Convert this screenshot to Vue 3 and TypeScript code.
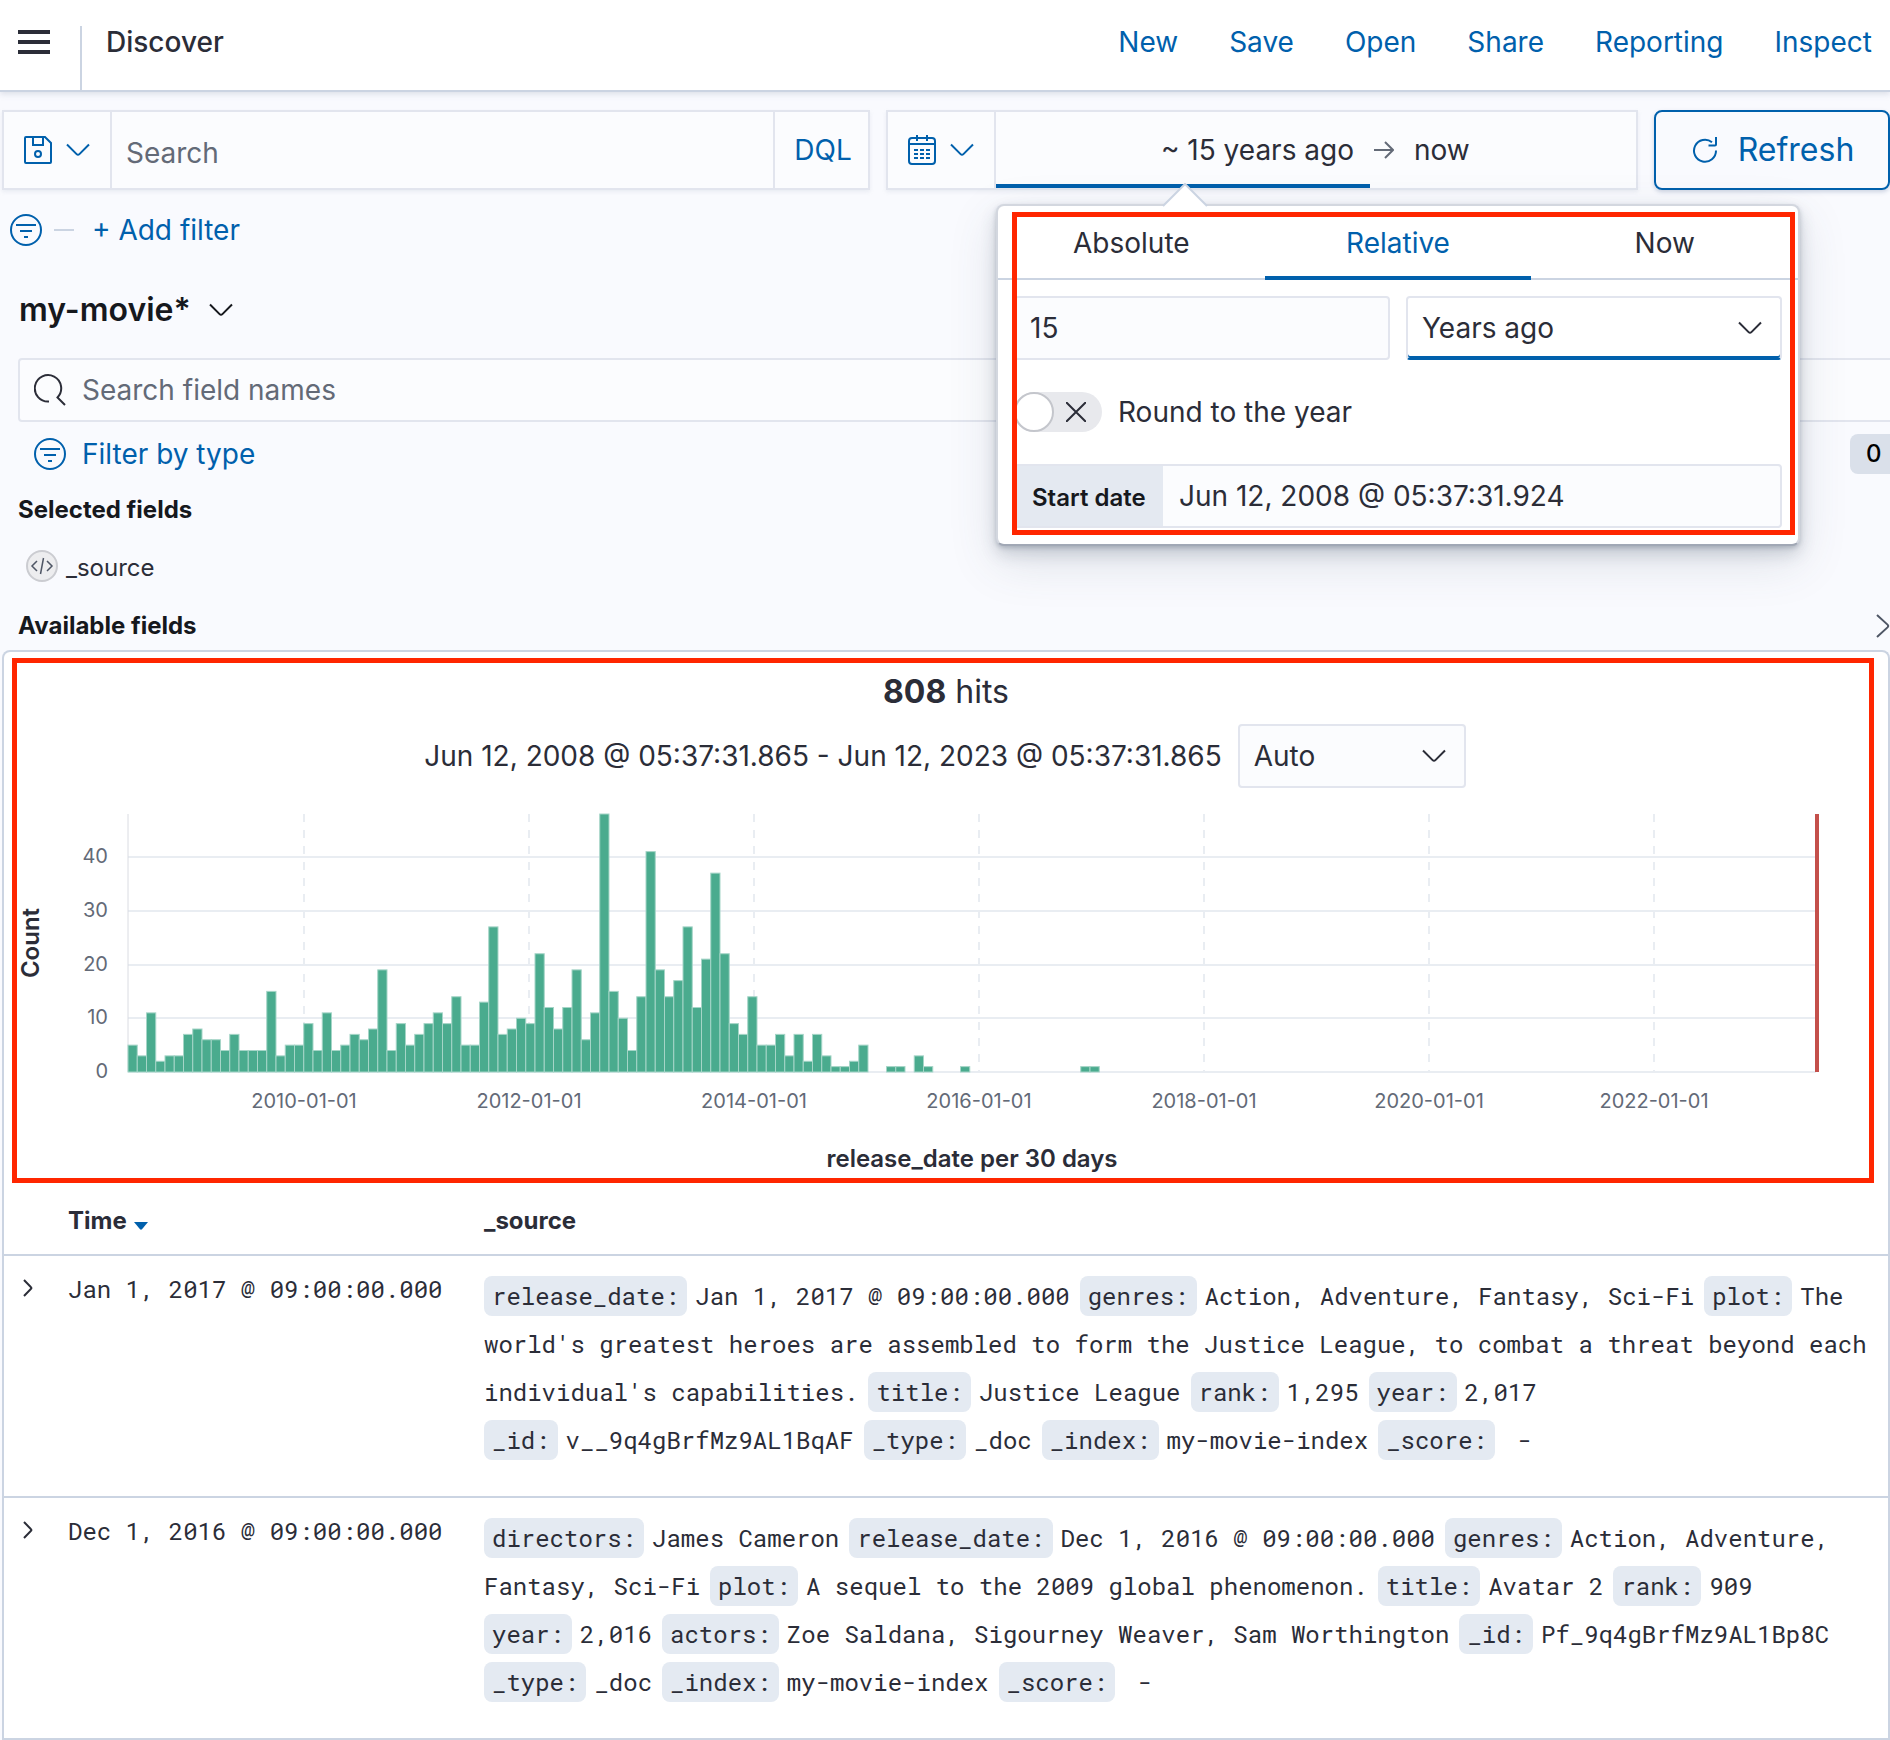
<script setup lang="ts">
import { computed, ref } from 'vue'

interface Field {
  name: string
  value: string
}
interface Hit {
  time: string
  fields: Field[]
}

const menu: string[] = ['New', 'Save', 'Open', 'Share', 'Reporting', 'Inspect']
const tabs: string[] = ['Absolute', 'Relative', 'Now']
const activeTab = ref('Relative')
const query = ref('')
const fieldQuery = ref('')
const amount = ref('15')
const unit = ref('Years ago')
const rounded = ref(false)
const interval = ref('Auto')
const startDate = ref('Jun 12, 2008 @ 05:37:31.924')

// Documents per 30-day bucket, starting at the left edge of the time range
const counts: number[] = [
  5, 3, 11, 2, 3, 3, 7, 8, 6, 6, 4, 7, 4, 4, 4, 15, 3, 5, 5, 9,
  4, 11, 4, 5, 7, 6, 8, 19, 4, 9, 5, 7, 9, 11, 9, 14, 5, 5, 13, 27,
  7, 8, 10, 9, 22, 12, 8, 12, 19, 6, 11, 48, 15, 10, 4, 14, 41, 19, 14, 17,
  27, 12, 21, 37, 22, 9, 7, 14, 5, 5, 7, 3, 7, 2, 7, 3, 1, 1, 2, 5,
  0, 0, 1, 1, 0, 3, 1, 0, 0, 0, 1, 0, 0, 0, 0, 0, 0, 0, 0, 0,
  0, 0, 0, 1, 1,
]
const plot = { left: 111, right: 1799, top: 10, bottom: 268 }
const step = 9.25
const perUnit = (plot.bottom - plot.top) / 48

const bars = computed(() =>
  counts
    .map((count, i) => ({
      x: plot.left + i * step,
      y: plot.bottom - count * perUnit,
      height: count * perUnit,
      count,
    }))
    .filter((bar) => bar.count > 0),
)
const yTicks = [0, 10, 20, 30, 40].map((value) => ({
  value,
  y: Math.round(plot.bottom - value * perUnit),
}))
const xTicks = [2010, 2012, 2014, 2016, 2018, 2020, 2022].map((year, i) => ({
  label: `${year}-01-01`,
  x: 287 + i * 225,
}))

const hits: Hit[] = [
  {
    time: 'Jan 1, 2017 @ 09:00:00.000',
    fields: [
      { name: 'release_date', value: 'Jan 1, 2017 @ 09:00:00.000' },
      { name: 'genres', value: 'Action, Adventure, Fantasy, Sci-Fi' },
      {
        name: 'plot',
        value:
          "The world's greatest heroes are assembled to form the Justice League, to combat a threat beyond each individual's capabilities.",
      },
      { name: 'title', value: 'Justice League' },
      { name: 'rank', value: '1,295' },
      { name: 'year', value: '2,017' },
      { name: '_id', value: 'v__9q4gBrfMz9AL1BqAF' },
      { name: '_type', value: '_doc' },
      { name: '_index', value: 'my-movie-index' },
      { name: '_score', value: '\u00a0-' },
    ],
  },
  {
    time: 'Dec 1, 2016 @ 09:00:00.000',
    fields: [
      { name: 'directors', value: 'James Cameron' },
      { name: 'release_date', value: 'Dec 1, 2016 @ 09:00:00.000' },
      { name: 'genres', value: 'Action, Adventure, Fantasy, Sci-Fi' },
      { name: 'plot', value: 'A sequel to the 2009 global phenomenon.' },
      { name: 'title', value: 'Avatar 2' },
      { name: 'rank', value: '909' },
      { name: 'year', value: '2,016' },
      { name: 'actors', value: 'Zoe Saldana, Sigourney Weaver, Sam Worthington' },
      { name: '_id', value: 'Pf_9q4gBrfMz9AL1Bp8C' },
      { name: '_type', value: '_doc' },
      { name: '_index', value: 'my-movie-index' },
      { name: '_score', value: '\u00a0-' },
    ],
  },
]
</script>

<template>
  <div class="page">
    <header class="header">
      <button class="burger" type="button" aria-label="Toggle navigation">
        <svg width="32" height="24" viewBox="0 0 32 24"><path d="M0 2h32M0 12h32M0 22h32" stroke="#2b2d38" stroke-width="4" /></svg>
      </button>
      <h1 class="title">Discover</h1>
      <nav class="menu">
        <a v-for="item in menu" :key="item" href="#">{{ item }}</a>
      </nav>
    </header>

    <div class="querybar">
      <div class="box search">
        <button class="box-button" type="button" aria-label="Saved queries">
          <svg width="28" height="28" viewBox="0 0 28 28" fill="none" stroke="currentColor" stroke-width="2">
            <path d="M2 1h19l6 6v19a1 1 0 0 1-1 1H2a1 1 0 0 1-1-1V2a1 1 0 0 1 1-1zM9 1v8h10V1" />
            <circle cx="14" cy="18" r="3" />
          </svg>
          <svg class="chevron" width="24" height="14" viewBox="0 0 24 14"><path d="M1 1.500l9.600 9.600a2 2 0 0 0 2.800 0L23 1.500" /></svg>
        </button>
        <input v-model="query" class="query" type="text" placeholder="Search" aria-label="Search" />
        <button class="language" type="button">DQL</button>
      </div>

      <div class="box dates">
        <button class="box-button calendar" type="button" aria-label="Quick date select">
          <svg width="28" height="32" viewBox="0 0 28 32" fill="none" stroke="currentColor" stroke-width="2">
            <rect x="1" y="4" width="26" height="26" rx="3" />
            <path d="M1 10h26M9 1v6M19 1v6" />
            <path d="M6 16h16M6 20h16M6 24h16" stroke-dasharray="4 2" />
          </svg>
          <svg class="chevron" width="24" height="14" viewBox="0 0 24 14"><path d="M1 1.500l9.600 9.600a2 2 0 0 0 2.800 0L23 1.500" /></svg>
        </button>
        <div class="range">
          <button class="date start" type="button">~ 15 years ago</button>
          <svg class="arrow" width="20" height="20" viewBox="0 0 20 20"><path d="M0 10h19M11 2l8 8-8 8" /></svg>
          <button class="date" type="button">now</button>

          <div class="popover" role="dialog" aria-label="Start date">
            <svg class="tip" width="46" height="24" viewBox="0 0 46 24"><path d="M1 23L23 1l22 22" /></svg>
            <div class="tabs" role="tablist">
              <button
                v-for="tab in tabs"
                :key="tab"
                class="tab"
                :class="{ active: tab === activeTab }"
                type="button"
                role="tab"
                :aria-selected="tab === activeTab"
                @click="activeTab = tab"
              >
                {{ tab }}
              </button>
            </div>
            <div class="form">
              <div class="pair">
                <input v-model="amount" class="control" type="text" aria-label="Amount" />
                <div class="select focused">
                  <select v-model="unit" aria-label="Unit"><option>Years ago</option><option>Months ago</option></select>
                  <svg class="chevron" width="24" height="14" viewBox="0 0 24 14"><path d="M1 1.500l9.600 9.600a2 2 0 0 0 2.800 0L23 1.500" /></svg>
                </div>
              </div>
              <label class="switch">
                <input v-model="rounded" type="checkbox" />
                <span class="track">
                  <span class="thumb"></span>
                  <svg width="20" height="20" viewBox="0 0 20 20"><path d="M0 0l20 20M20 0L0 20" stroke="#2b2d38" stroke-width="2" /></svg>
                </span>
                Round to the year
              </label>
              <div class="labelled">
                <label for="start-date">Start date</label>
                <input id="start-date" :value="startDate" type="text" readonly />
              </div>
            </div>
            <div class="highlight"></div>
          </div>
        </div>
      </div>

      <button class="refresh" type="button">
        <svg width="26" height="26" viewBox="0 0 26 26" fill="none" stroke="currentColor" stroke-width="2">
          <path d="M24 13.500A11 11 0 1 1 20 5.200M24 0v7.500a1 1 0 0 1-1 1h-6.500" />
        </svg>
        Refresh
      </button>
    </div>

    <div class="filters">
      <button class="icon-button" type="button" aria-label="Change all filters">
        <svg width="32" height="32" viewBox="0 0 32 32" fill="none" stroke="currentColor" stroke-width="2"><circle cx="16" cy="16" r="15" /><path d="M6 11h20M10 17h12M14 23h4" /></svg>
      </button>
      <span class="dash"></span>
      <a href="#">+ Add filter</a>
    </div>

    <aside class="sidebar">
      <button class="pattern" type="button">
        my-movie*
        <svg class="chevron" width="24" height="14" viewBox="0 0 24 14"><path d="M1 1.500l9.600 9.600a2 2 0 0 0 2.800 0L23 1.500" /></svg>
      </button>
      <label class="field-search">
        <svg width="32" height="32" viewBox="0 0 32 32" fill="none" stroke="#2b2d38" stroke-width="2">
          <path d="M15 27.500A13.200 13.200 0 1 1 23.500 23.500L31 31" />
        </svg>
        <input v-model="fieldQuery" type="text" placeholder="Search field names" aria-label="Search field names" />
      </label>
      <div class="type-filter">
        <button type="button">
          <svg width="32" height="32" viewBox="0 0 32 32" fill="none" stroke="currentColor" stroke-width="2"><circle cx="16" cy="16" r="15" /><path d="M6 11h20M10 17h12M14 23h4" /></svg>
          Filter by type
        </button>
        <span class="badge">0</span>
      </div>
      <h2>Selected fields</h2>
      <div class="field">
        <svg width="32" height="32" viewBox="0 0 32 32" fill="none">
          <circle cx="16" cy="16" r="15" fill="#ededef" stroke="#cbccd1" stroke-width="2" />
          <path d="M11 11l-5 5 5 5M21 11l5 5-5 5M17.500 8l-3 16" stroke="#4f5665" stroke-width="1.500" />
        </svg>
        <span>_source</span>
      </div>
      <div class="available">
        <h2>Available fields</h2>
        <button type="button" aria-label="Toggle available fields">
          <svg class="chevron" width="14" height="24" viewBox="0 0 14 24"><path d="M1 1l10.500 9.600a2 2 0 0 1 0 2.800L1 23" /></svg>
        </button>
      </div>
    </aside>

    <main class="panel">
      <section class="histogram">
        <p class="hits"><strong>808</strong> hits</p>
        <div class="interval">
          <span>Jun 12, 2008 @ 05:37:31.865 - Jun 12, 2023 @ 05:37:31.865</span>
          <div class="select">
            <select v-model="interval" aria-label="Interval"><option>Auto</option><option>Month</option></select>
            <svg class="chevron" width="24" height="14" viewBox="0 0 24 14"><path d="M1 1.500l9.600 9.600a2 2 0 0 0 2.800 0L23 1.500" /></svg>
          </div>
        </div>
        <svg class="chart" viewBox="0 0 1852 374" role="img" aria-label="Count of documents by release_date per 30 days">
          <path v-for="t in yTicks" :key="t.value" class="grid" :d="`M${plot.left} ${t.y}H${plot.right}`" />
          <path v-for="t in xTicks" :key="t.label" class="grid dashed" :d="`M${t.x} ${plot.top}V${plot.bottom}`" />
          <path class="axis" :d="`M${plot.left} ${plot.top}V${plot.bottom}`" />
          <rect v-for="b in bars" :key="b.x" class="bar" :x="b.x" :y="b.y" :width="step" :height="b.height" />
          <path class="now" :d="`M1800 ${plot.top}V${plot.bottom}`" />
          <text v-for="t in yTicks" :key="`y${t.value}`" class="tick" text-anchor="end" x="91" :y="t.y + 6">{{ t.value }}</text>
          <text v-for="t in xTicks" :key="`x${t.label}`" class="tick" text-anchor="middle" :x="t.x" y="304">{{ t.label }}</text>
          <text class="axis-title" text-anchor="middle" transform="translate(22 139) rotate(-90)">Count</text>
          <text class="axis-title" text-anchor="middle" x="955" y="363">release_date per 30 days</text>
        </svg>
      </section>

      <table class="docs">
        <thead>
          <tr>
            <th class="expand"></th>
            <th class="time">Time <svg width="14" height="8" viewBox="0 0 14 8"><path d="M0 0h14L8 7.300a1.500 1.500 0 0 1-2 0z" fill="#0060ac" /></svg></th>
            <th>_source</th>
          </tr>
        </thead>
        <tbody>
          <tr v-for="hit in hits" :key="hit.time">
            <td class="expand">
              <button type="button" aria-label="Expand document">
                <svg width="10" height="18" viewBox="0 0 10 18"><path d="M1 1l7 7.200a1 1 0 0 1 0 1.600L1 17" /></svg>
              </button>
            </td>
            <td class="time">{{ hit.time }}</td>
            <td>
              <dl>
                <div v-for="f in hit.fields" :key="f.name"><dt>{{ f.name }}:</dt><dd>{{ f.value }}&#8203;</dd></div>
              </dl>
            </td>
          </tr>
        </tbody>
      </table>
    </main>
  </div>
</template>

<style>
body {
  margin: 0;
  background: #f9fafe;
}
</style>

<style scoped>
.page {
  overflow: hidden;
  font-family: Inter, "Liberation Sans", sans-serif;
  font-size: 28px;
  line-height: 48px;
  color: #2b2d38;
}
*,
*::before {
  box-sizing: border-box;
}
button,
input,
select {
  margin: 0;
  padding: 0;
  border: 0;
  background: none;
  font: inherit;
  color: inherit;
  outline: 0;
  min-width: 0;
}
button {
  cursor: pointer;
}
input::placeholder {
  color: #636a77;
  opacity: 1;
}
a {
  color: #0060ac;
  text-decoration: none;
}
svg {
  flex: none;
}
.chevron {
  fill: none;
  stroke: currentColor;
  stroke-width: 2;
}

.header {
  display: flex;
  height: 92px;
  background: #fff;
  border-bottom: 2px solid #cbd4e2;
  box-shadow: 0 2px 6px rgba(150, 160, 180, 0.3);
}
.burger {
  width: 80px;
  padding: 30px 0 0 18px;
  display: flex;
}
.title {
  margin: 26px 0 0;
  padding-left: 24px;
  border-left: 2px solid #cbd4e2;
  font-size: 28px;
  font-weight: 500;
  line-height: 32px;
}
.menu {
  display: flex;
  gap: 51px;
  margin-left: auto;
  padding: 18px 18px 0 0;
}

.querybar {
  display: flex;
  gap: 16px;
  padding: 18px 0 0 2px;
}
.box {
  display: flex;
  height: 80px;
  border: 2px solid #e2e5ee;
  background: #fbfcfe;
  box-shadow: 0 2px 4px rgba(150, 160, 180, 0.15);
}
.search {
  flex: 1;
}
.box-button {
  display: flex;
  align-items: center;
  gap: 14px;
  padding: 0 20px;
  border-right: 2px solid #e2e5ee;
  color: #0060ac;
}
.query {
  flex: 1;
  padding: 6px 14px 0;
}
.language {
  width: 95px;
  padding-left: 3px;
  border-left: 2px solid #e2e5ee;
  color: #0060ac;
}
.dates {
  width: 752px;
}
.calendar {
  width: 108px;
}
.range {
  position: relative;
  flex: 1;
  display: grid;
  grid-template-columns: 374px 28px 1fr;
  align-items: center;
}
.date {
  height: 76px;
  padding: 0 16px;
  text-align: left;
}
.start {
  text-align: right;
  border-bottom: 4px solid #0060ac;
  padding-top: 4px;
}
.arrow {
  margin-left: 4px;
  fill: none;
  stroke: #636a77;
  stroke-width: 2;
}
.refresh {
  display: flex;
  align-items: center;
  justify-content: center;
  gap: 20px;
  width: 236px;
  height: 80px;
  padding-left: 2px;
  border: 2px solid #0060ac;
  border-radius: 8px;
  box-shadow: 0 2px 4px rgba(100, 120, 160, 0.3);
  font-size: 32px;
  color: #0060ac;
}

.popover {
  position: absolute;
  z-index: 2;
  top: 92px;
  left: 0;
  width: 804px;
  border: 2px solid #d3d7df;
  border-bottom-color: #a1a8b5;
  border-radius: 8px;
  background: #fff;
  box-shadow: 0 2px 4px rgba(65, 78, 101, 0.25), 0 8px 16px rgba(65, 78, 101, 0.2),
    0 16px 48px rgba(65, 78, 101, 0.15);
}
.tip {
  position: absolute;
  top: -23px;
  left: 164px;
  fill: #fff;
  stroke: #cbd4e2;
  stroke-width: 2;
}
.tabs {
  display: flex;
  height: 74px;
  border-bottom: 2px solid #cbd4e2;
}
.tab {
  flex: 1;
  height: 74px;
}
.tab.active {
  box-shadow: inset 0 -4px #0060ac;
  color: #0060ac;
}
.form {
  padding: 16px;
}
.pair {
  display: grid;
  grid-template-columns: 1fr 1fr;
  gap: 16px;
}
.control,
.select {
  height: 64px;
  border: 2px solid #e2e5ee;
  border-radius: 4px;
  background: #fbfcfe;
}
.control {
  padding-left: 14px;
}
.select {
  position: relative;
  display: flex;
}
.select select {
  flex: 1;
  padding-left: 14px;
  appearance: none;
}
.select .chevron {
  position: absolute;
  top: 23px;
  right: 18px;
  pointer-events: none;
}
.focused {
  background: #fff;
  border-bottom-color: #0060ac;
  box-shadow: inset 0 -2px #0060ac;
}
.switch {
  display: flex;
  align-items: center;
  gap: 16px;
  margin: 28px 0;
}
.switch input {
  position: absolute;
  opacity: 0;
}
.track {
  display: flex;
  align-items: center;
  justify-content: space-between;
  width: 88px;
  height: 40px;
  padding-right: 16px;
  border-radius: 20px;
  background: #e8e9ed;
}
.thumb {
  width: 40px;
  height: 40px;
  border: 2px solid #c4c6cc;
  border-radius: 50%;
  background: #fff;
}
.labelled {
  display: flex;
  height: 64px;
  border: 2px solid #e2e5ee;
  border-radius: 4px;
  background: #fbfcfe;
}
.labelled label {
  width: 147px;
  padding-left: 16px;
  background: #e4e9f1;
  font-size: 24px;
  font-weight: 600;
  line-height: 64px;
  color: #16181d;
}
.labelled input {
  flex: 1;
  padding-left: 16px;
}
.highlight {
  position: absolute;
  inset: 6px 3px 9px 14px;
  border: 5px solid #ff2600;
  pointer-events: none;
}

.filters {
  display: flex;
  align-items: center;
  height: 48px;
  margin-top: 16px;
  padding-left: 10px;
}
.icon-button {
  display: flex;
  color: #0060ac;
}
.dash {
  width: 20px;
  height: 2px;
  margin: 0 18px 0 12px;
  background: #cbd4e2;
}

.sidebar {
  margin: 32px -16px 0 0;
  padding-left: 18px;
}
.pattern {
  display: flex;
  align-items: center;
  gap: 18px;
  padding-left: 1px;
  font-size: 32px;
  font-weight: 600;
  color: #16181d;
}
.field-search {
  display: flex;
  align-items: center;
  gap: 16px;
  height: 64px;
  margin-top: 24px;
  padding-left: 14px;
  border: 2px solid #e2e5ee;
  border-radius: 4px;
  background: #fbfcfe;
}
.field-search input {
  flex: 1;
}
.type-filter {
  display: flex;
  justify-content: space-between;
  align-items: center;
  margin-top: 8px;
  padding-left: 16px;
}
.type-filter button {
  display: flex;
  align-items: center;
  gap: 16px;
  color: #0060ac;
}
.badge {
  width: 56px;
  padding-left: 16px;
  border-radius: 8px;
  background: #dae0ea;
  font-size: 24px;
  font-weight: 500;
  line-height: 40px;
  color: #000;
}
h2 {
  margin: 14px 0 0;
  font-size: 24px;
  font-weight: 700;
  line-height: 36px;
  color: #16181d;
}
.field {
  display: flex;
  align-items: center;
  gap: 8px;
  height: 32px;
  margin-top: 22px;
  padding-left: 8px;
  font-size: 24px;
  line-height: 32px;
}
.field span {
  padding-top: 3px;
}
.available {
  display: flex;
  justify-content: space-between;
  align-items: center;
  margin-top: 26px;
  padding-right: 16px;
}
.available h2 {
  margin: 0;
}
.available button {
  display: flex;
  color: #4f5665;
}

.panel {
  margin: 6px 0 0 2px;
  border: 2px solid #cbd4e2;
  border-bottom: 0;
  border-radius: 8px 8px 0 0;
  background: #fff;
}
.histogram {
  margin: 6px 14px 0 8px;
  border: 5px solid #ff2600;
}
.hits {
  margin: 5px 0 8px;
  padding-left: 6px;
  text-align: center;
  font-size: 32px;
}
.hits strong {
  font-weight: 700;
}
.interval {
  display: flex;
  justify-content: center;
  align-items: center;
  gap: 16px;
  padding-left: 4px;
}
.interval .select {
  width: 228px;
}
.chart {
  display: block;
  width: 100%;
  margin-top: 16px;
}
.grid {
  stroke: #e9edf2;
  stroke-width: 2;
}
.dashed {
  stroke-dasharray: 8 8;
}
.axis {
  stroke: #dadce2;
  stroke-width: 1;
}
.bar {
  fill: #4aab8e;
  stroke: #a5d5c7;
  stroke-width: 1;
}
.now {
  stroke: #c4504b;
  stroke-width: 4;
}
.tick {
  font-size: 20px;
  fill: #636a77;
}
.axis-title {
  font-size: 24px;
  font-weight: 600;
  fill: #2b2d38;
}

.docs {
  width: 100%;
  table-layout: fixed;
  border-collapse: separate;
  border-spacing: 0;
  font-size: 24px;
  line-height: 36px;
}
.docs th {
  padding: 20px 8px 15px;
  border-bottom: 2px solid #cbd4e2;
  text-align: left;
  font-weight: 700;
}
.docs th svg {
  margin: 0 0 -1px 2px;
}
.docs td {
  padding: 16px 8px 32px;
  border-bottom: 2px solid #cbd4e2;
  vertical-align: top;
  font-family: "Roboto Mono", "Liberation Mono", monospace;
}
.docs .expand {
  width: 56px;
}
.docs .time {
  width: 416px;
}
.docs td.time {
  line-height: 34px;
}
.docs td.expand {
  padding: 23px 0 0 19px;
}
.expand button {
  display: flex;
}
.expand path {
  fill: none;
  stroke: #2b2d38;
  stroke-width: 2;
}
dl {
  margin: 0;
  line-height: 48px;
}
dl div,
dt,
dd {
  display: inline;
}
dt {
  margin-right: 8px;
  padding: 4px 8px;
  border-radius: 8px;
  background: #e4eaf2;
}
dd {
  margin: 0 10px 0 0;
}
</style>
